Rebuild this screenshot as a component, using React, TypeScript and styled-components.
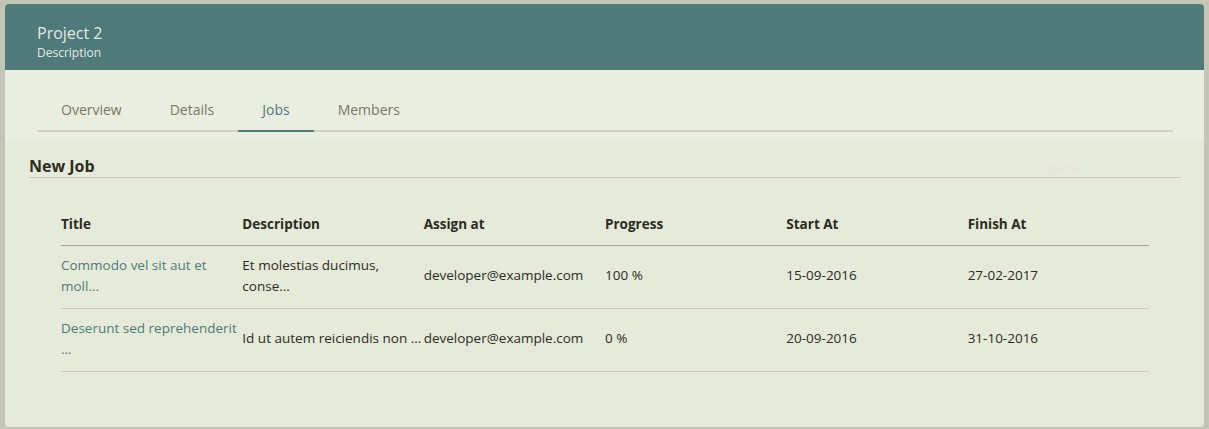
import React from "react";
import styled, { createGlobalStyle } from "styled-components";

const Global = createGlobalStyle`
  html, body { margin: 0; padding: 0; background: #c3c6b7; }
  body { font-family: "Open Sans", "Noto Sans", sans-serif; }
  * { box-sizing: border-box; }
`;

const Page = styled.div`
  padding: 4px 5px 2px 5px;
  height: 429px;
`;

const Card = styled.div`
  background: #e6eadb;
  border-radius: 4px;
  overflow: hidden;
  height: 423px;
`;

const Header = styled.div`
  background: #507a7a;
  height: 66px;
  padding: 19px 32px 0 32px;
  color: #e3ebe1;
`;

const Title = styled.div`
  font-size: 16px;
  line-height: 20px;
`;

const Sub = styled.div`
  font-size: 12px;
  line-height: 16px;
  margin-top: 2px;
`;

const TabArea = styled.div`
  background: #eaeee0;
  padding: 24px 31px 9px 32px;
`;

const TabBar = styled.div`
  display: flex;
  border-bottom: 2px solid #cfd2c4;
`;

const Tab = styled.div<{ $active?: boolean }>`
  font-size: 14px;
  line-height: 20px;
  padding: 6px 24px 10px 24px;
  color: ${(p) => (p.$active ? "#4f7a7a" : "#7a765f")};
  margin-bottom: -2px;
  border-bottom: 2px solid ${(p) => (p.$active ? "#4f7a7a" : "transparent")};
`;

const Section = styled.div`
  padding: 14px 23px 0 24px;
`;

const SectionHead = styled.div`
  display: flex;
  justify-content: space-between;
  align-items: flex-end;
  border-bottom: 1px solid #c7cabb;
`;

const SectionTitle = styled.h2`
  margin: 0;
  font-size: 16px;
  font-weight: 700;
  line-height: 22px;
  color: #2b2b22;
`;

const Expand = styled.span`
  font-size: 13px;
  color: #e3e7d8;
  margin-right: 99px;
  line-height: 20px;
`;

const TableWrap = styled.div`
  padding: 36px 32px 0 32px;
`;

const Table = styled.table`
  width: 100%;
  border-collapse: collapse;
  table-layout: fixed;
  font-size: 13.5px;
  color: #2b2b22;
`;

const Th = styled.th`
  text-align: left;
  font-weight: 700;
  padding: 0 0 11px 0;
  line-height: 20px;
  border-bottom: 1px solid #a1a395;
`;

const Td = styled.td<{ $link?: boolean }>`
  padding: 6px 0 9px 0;
  height: 63px;
  line-height: 21px;
  vertical-align: middle;
  color: ${(p) => (p.$link ? "#4f7a7a" : "#2b2b22")};
  border-bottom: 1px solid #c9ccbd;
`;

const jobs = [
  ["Commodo vel sit aut et moll...", "Et molestias ducimus, conse...", "developer@example.com", "100 %", "15-09-2016", "27-02-2017"],
  ["Deserunt sed reprehenderit ...", "Id ut autem reiciendis non ...", "developer@example.com", "0 %", "20-09-2016", "31-10-2016"],
];

export default function App() {
  return (
    <Page>
      <Global />
      <Card>
        <Header>
          <Title>Project 2</Title>
          <Sub>Description</Sub>
        </Header>
        <TabArea>
          <TabBar>
            <Tab>Overview</Tab>
            <Tab>Details</Tab>
            <Tab $active>Jobs</Tab>
            <Tab>Members</Tab>
          </TabBar>
        </TabArea>
        <Section>
          <SectionHead>
            <SectionTitle>New Job</SectionTitle>
            <Expand>Expand</Expand>
          </SectionHead>
          <TableWrap>
            <Table>
              <thead>
                <tr>
                  <Th>Title</Th>
                  <Th>Description</Th>
                  <Th>Assign at</Th>
                  <Th>Progress</Th>
                  <Th>Start At</Th>
                  <Th>Finish At</Th>
                </tr>
              </thead>
              <tbody>
                {jobs.map((j, i) => (
                  <tr key={i}>
                    {j.map((c, k) => (
                      <Td key={k} $link={k === 0}>{c}</Td>
                    ))}
                  </tr>
                ))}
              </tbody>
            </Table>
          </TableWrap>
        </Section>
      </Card>
    </Page>
  );
}
